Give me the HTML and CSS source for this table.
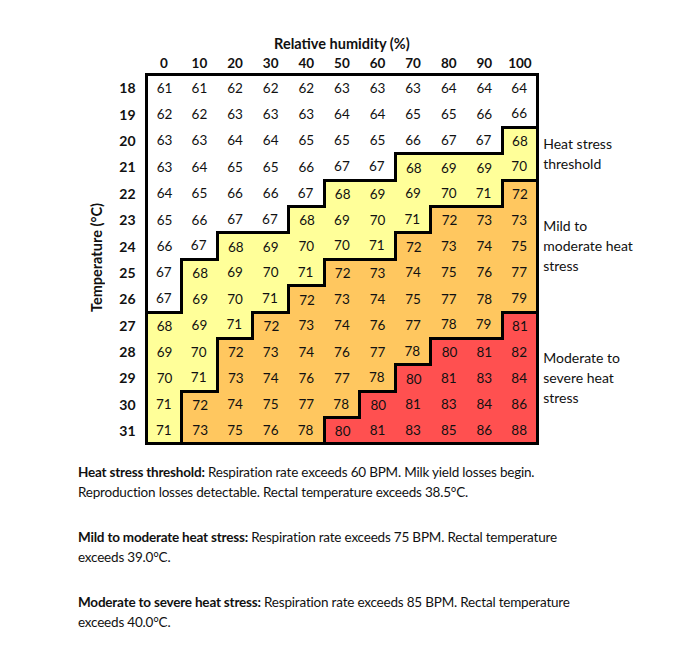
FILE: index.html
```html
<!DOCTYPE html>
<html lang="en">
<head>
<meta charset="utf-8">
<title>Heat stress index</title>
<link rel="stylesheet" href="styles.css">
</head>
<body>
<main class="page">
<table class="chart">
<colgroup>
<col class="c-axis"><col class="c-row">
<col class="c-d"><col class="c-d"><col class="c-d"><col class="c-d"><col class="c-d"><col class="c-d"><col class="c-d"><col class="c-d"><col class="c-d"><col class="c-d"><col class="c-d">
<col class="c-leg">
</colgroup>
<thead>
<tr class="hr"><th colspan="2"></th><th colspan="11" class="title">Relative humidity (%)</th><th></th></tr>
<tr class="hr"><th colspan="2"></th><th>0</th><th>10</th><th>20</th><th>30</th><th>40</th><th>50</th><th>60</th><th>70</th><th>80</th><th>90</th><th>100</th><th></th></tr>
</thead>
<tbody>
<tr><td rowspan="14" class="axis"><span class="vlabel">Temperature (°C)</span></td><th class="rl">18</th>
<td class="w t l">61</td><td class="w t">61</td><td class="w t">62</td><td class="w t">62</td><td class="w t">62</td><td class="w t">63</td><td class="w t">63</td><td class="w t">63</td><td class="w t">64</td><td class="w t">64</td><td class="w t r">64</td>
<td rowspan="2" class="leg"></td></tr>
<tr><th class="rl">19</th>
<td class="w l">62</td><td class="w">62</td><td class="w">63</td><td class="w">63</td><td class="w">63</td><td class="w">64</td><td class="w">64</td><td class="w">65</td><td class="w">65</td><td class="w">66</td><td class="w r">66</td></tr>
<tr><th class="rl">20</th>
<td class="w l">63</td><td class="w">63</td><td class="w">64</td><td class="w">64</td><td class="w">65</td><td class="w">65</td><td class="w">65</td><td class="w">66</td><td class="w">67</td><td class="w">67</td><td class="y t l r">68</td>
<td rowspan="2" class="leg">Heat stress<br>threshold</td></tr>
<tr><th class="rl">21</th>
<td class="w l">63</td><td class="w">64</td><td class="w">65</td><td class="w">65</td><td class="w">66</td><td class="w">67</td><td class="w">67</td><td class="y t l">68</td><td class="y t">69</td><td class="y t">69</td><td class="y r">70</td></tr>
<tr><th class="rl">22</th>
<td class="w l">64</td><td class="w">65</td><td class="w">66</td><td class="w">66</td><td class="w">67</td><td class="y t l">68</td><td class="y t">69</td><td class="y">69</td><td class="y">70</td><td class="y">71</td><td class="o t l r">72</td>
<td rowspan="5" class="leg">Mild to<br>moderate heat<br>stress</td></tr>
<tr><th class="rl">23</th>
<td class="w l">65</td><td class="w">66</td><td class="w">67</td><td class="w">67</td><td class="y t l">68</td><td class="y">69</td><td class="y">70</td><td class="y">71</td><td class="o t l">72</td><td class="o t">73</td><td class="o r">73</td></tr>
<tr><th class="rl">24</th>
<td class="w l">66</td><td class="w">67</td><td class="y t l">68</td><td class="y t">69</td><td class="y">70</td><td class="y">70</td><td class="y">71</td><td class="o t l">72</td><td class="o">73</td><td class="o">74</td><td class="o r">75</td></tr>
<tr><th class="rl">25</th>
<td class="w l">67</td><td class="y t l">68</td><td class="y">69</td><td class="y">70</td><td class="y">71</td><td class="o t l">72</td><td class="o t">73</td><td class="o">74</td><td class="o">75</td><td class="o">76</td><td class="o r">77</td></tr>
<tr><th class="rl">26</th>
<td class="w l">67</td><td class="y l">69</td><td class="y">70</td><td class="y">71</td><td class="o t l">72</td><td class="o">73</td><td class="o">74</td><td class="o">75</td><td class="o">77</td><td class="o">78</td><td class="o r">79</td></tr>
<tr><th class="rl">27</th>
<td class="y t l">68</td><td class="y">69</td><td class="y">71</td><td class="o t l">72</td><td class="o">73</td><td class="o">74</td><td class="o">76</td><td class="o">77</td><td class="o">78</td><td class="o">79</td><td class="rd t l r">81</td>
<td rowspan="5" class="leg">Moderate to<br>severe heat<br>stress</td></tr>
<tr><th class="rl">28</th>
<td class="y l">69</td><td class="y">70</td><td class="o t l">72</td><td class="o">73</td><td class="o">74</td><td class="o">76</td><td class="o">77</td><td class="o">78</td><td class="rd t l">80</td><td class="rd t">81</td><td class="rd r">82</td></tr>
<tr><th class="rl">29</th>
<td class="y l">70</td><td class="y">71</td><td class="o l">73</td><td class="o">74</td><td class="o">76</td><td class="o">77</td><td class="o">78</td><td class="rd t l">80</td><td class="rd">81</td><td class="rd">83</td><td class="rd r">84</td></tr>
<tr><th class="rl">30</th>
<td class="y l">71</td><td class="o t l">72</td><td class="o">74</td><td class="o">75</td><td class="o">77</td><td class="o">78</td><td class="rd t l">80</td><td class="rd">81</td><td class="rd">83</td><td class="rd">84</td><td class="rd r">86</td></tr>
<tr><th class="rl">31</th>
<td class="y l b">71</td><td class="o l b">73</td><td class="o b">75</td><td class="o b">76</td><td class="o b">78</td><td class="rd t l b">80</td><td class="rd b">81</td><td class="rd b">83</td><td class="rd b">85</td><td class="rd b">86</td><td class="rd r b">88</td></tr>
</tbody>
</table>

<section class="notes">
<p><b>Heat stress threshold:</b> Respiration rate exceeds 60 BPM. Milk yield losses begin.<br>Reproduction losses detectable. Rectal temperature exceeds 38.5°C.</p>
<p><b>Mild to moderate heat stress:</b> Respiration rate exceeds 75 BPM. Rectal temperature<br>exceeds 39.0°C.</p>
<p><b>Moderate to severe heat stress:</b> Respiration rate exceeds 85 BPM. Rectal temperature<br>exceeds 40.0°C.</p>
</section>
</main>
</body>
</html>
```
FILE: styles.css
```css
html, body {
  margin: 0;
  padding: 0;
  background: #ffffff;
}
body {
  font-family: Lato, "Open Sans", "Liberation Sans", sans-serif;
  color: #111111;
}
.page {
  padding: 33px 0 0 84px;
}
.chart {
  border-collapse: collapse;
  table-layout: fixed;
  width: 614px;
}
.c-axis { width: 24px; }
.c-row { width: 38px; }
.c-d { width: 35.6px; }
.c-leg { width: 160px; }
.chart th, .chart td {
  padding: 0;
  text-align: center;
  font-size: 13.5px;
}
.hr th {
  height: 20px;
  font-weight: 700;
  font-size: 13.5px;
  vertical-align: middle;
}
.hr .title {
  font-size: 14.5px;
}
.chart tbody tr {
  height: 26.4px;
}
.rl {
  font-weight: 700;
  text-align: right !important;
  padding-right: 9px !important;
  font-size: 14px !important;
}
.axis {
  vertical-align: middle;
}
.vlabel {
  display: inline-block;
  writing-mode: vertical-rl;
  transform: rotate(180deg);
  font-weight: 700;
  font-size: 14.5px;
  white-space: nowrap;
}
.leg {
  text-align: left !important;
  padding-left: 4px !important;
  font-size: 14px !important;
  line-height: 20px;
  vertical-align: middle;
}
.w { background: #ffffff; }
.y { background: #ffff99; }
.o { background: #ffc75f; }
.rd { background: #ff5050; }
.t { border-top: 3px solid #000; }
.l { border-left: 3px solid #000; }
.r { border-right: 3px solid #000; }
.b { border-bottom: 3px solid #000; }
.notes {
  padding: 17px 0 0 0;
  margin-left: -6px;
}
.notes p {
  margin: 0 0 25px 0;
  font-size: 13.5px;
  letter-spacing: -0.2px;
  line-height: 20px;
}
.notes b {
  font-weight: 700;
}
```
